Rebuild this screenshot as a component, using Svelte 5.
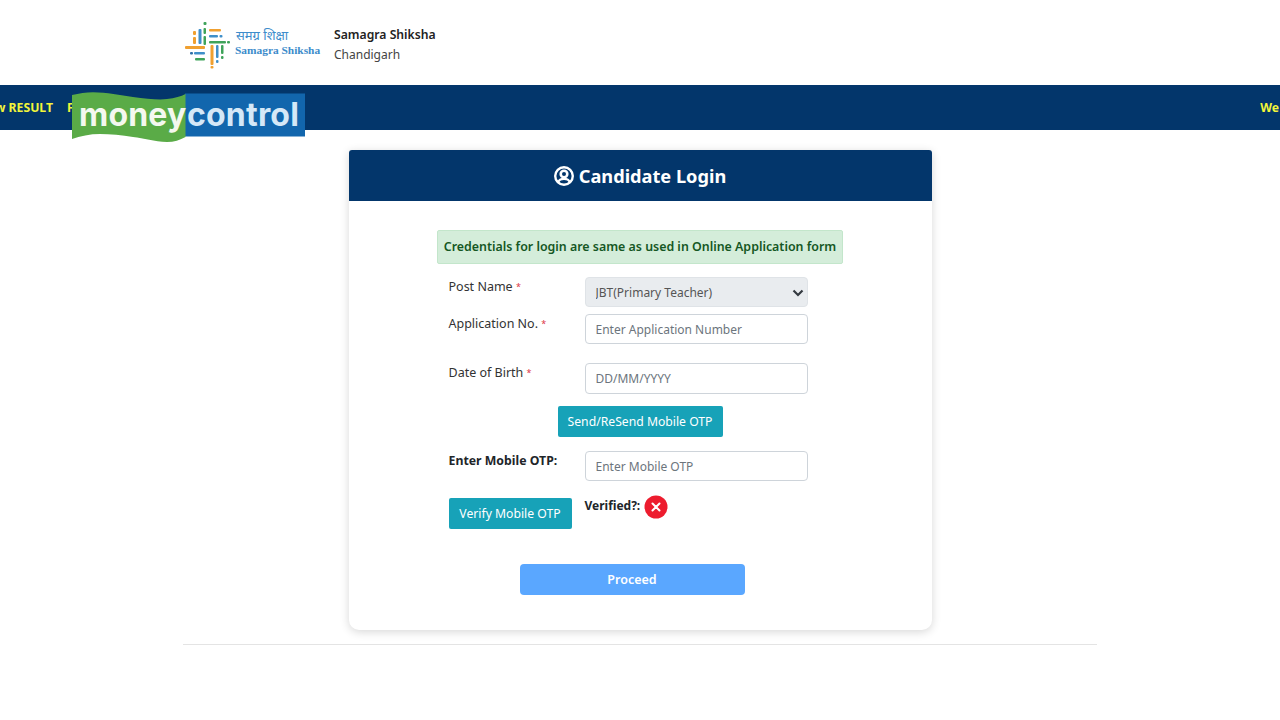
<script>
  let postName = 'JBT(Primary Teacher)';

  // logo bars: x, y, w, h, colour
  const O = '#f0a030', B = '#3f8fc9', G = '#3fa35a', N = '#2f6fa8';
  const bars = [
    [193, 31, 3, 4, O], [193, 37, 3, 7, O], [198.5, 29, 3, 15, B], [203.5, 22, 3, 3, G], [203.5, 28, 2.5, 6, G], [203.5, 36, 2.5, 9, G],
    [209, 29, 12, 2.5, O], [209, 35, 9, 2.5, B], [219.5, 35, 3, 2.5, B], [209, 41, 17, 2.5, G], [227, 41, 3, 2.5, G],
    [185, 46, 20, 3, O], [190, 52, 3, 2.5, N], [194, 52, 11, 2.5, B], [195, 58, 10, 2.5, G],
    [210.5, 45, 3, 20, O], [210.5, 66, 3, 2.5, O], [216, 45, 2.5, 13, B], [216, 60, 2.5, 3, B],
    [221, 45, 2.5, 9, G], [221, 56, 2.5, 3, G]
  ];
</script>

<header class="top">
  <svg class="mark" viewBox="180 18 54 54" width="54" height="54" aria-hidden="true">
    {#each bars as b}
      <rect x={b[0]} y={b[1]} width={b[2]} height={b[3]} rx="1" fill={b[4]} />
    {/each}
  </svg>
  <div class="logo-text">
    <span class="hi">समग्र शिक्षा</span>
    <span class="en">Samagra Shiksha</span>
  </div>
  <div class="org">
    <strong>Samagra Shiksha</strong>
    <span>Chandigarh</span>
  </div>
</header>

<div class="ticker">
  <span class="t1">w RESULT</span>
  <span class="t2">F</span>
  <span class="t3">We</span>
</div>

<div class="mc">
  <svg viewBox="0 0 233 50" width="233" height="50" aria-hidden="true">
    <rect x="113" y="1.5" width="120" height="43" fill="#1266ad" />
    <path d="M0 3 C7 1.5 14 0.3 21 0.3 C35 0.3 48 3.5 61 5 C75 7 88 8 95 7 C103 6 109 4.5 113.5 2 L113.5 45 C108 48 102 50 95 50 C82 49.5 72 46 61 45 C50 43 38 42 28 42 C18 42 8 44 0 47 Z" fill="#5aab47" />
  </svg>
  <span class="m1">money</span><span class="m2">control</span>
</div>

<main>
  <section class="card">
    <h1>
      <svg viewBox="0 0 20 20" width="20" height="20" aria-hidden="true">
        <circle cx="10" cy="10" r="8.8" fill="none" stroke="#fff" stroke-width="2.4" />
        <circle cx="10" cy="8" r="3.3" fill="none" stroke="#fff" stroke-width="2.6" />
        <path d="M4.4 16 C5.2 13.4 7.4 12.8 10 12.8 C12.6 12.8 14.8 13.4 15.6 16" fill="none" stroke="#fff" stroke-width="2.2" />
      </svg>
      Candidate Login
    </h1>

    <div class="body">
      <div class="alert">Credentials for login are same as used in Online Application form</div>

      <form class="form" on:submit|preventDefault>
        <div class="row r-post">
          <label for="post">Post Name <i>*</i></label>
          <div class="select-wrap">
            <select id="post" bind:value={postName} disabled>
              <option>JBT(Primary Teacher)</option>
            </select>
            <svg class="chev" viewBox="0 0 12 8" width="12" height="8" aria-hidden="true">
              <path d="M1.5 1.5 L6 6 L10.5 1.5" fill="none" stroke="#343a40" stroke-width="2.2" />
            </svg>
          </div>
        </div>

        <div class="row r-app">
          <label for="app">Application No. <i>*</i></label>
          <input id="app" type="text" placeholder="Enter Application Number" />
        </div>

        <div class="row r-dob">
          <label for="dob">Date of Birth <i>*</i></label>
          <input id="dob" type="text" placeholder="DD/MM/YYYY" />
        </div>

        <div class="send">
          <button type="button" class="teal send-btn">Send/ReSend Mobile OTP</button>
        </div>

        <div class="row r-otp">
          <label for="otp" class="strong">Enter Mobile OTP:</label>
          <input id="otp" type="text" placeholder="Enter Mobile OTP" />
        </div>

        <div class="row r-verify">
          <button type="button" class="teal verify-btn">Verify Mobile OTP</button>
          <div class="verified">
            <b>Verified?:</b>
            <svg viewBox="0 0 24 24" width="24" height="24" aria-hidden="true">
              <circle cx="12" cy="12" r="11.5" fill="#ed1c2e" />
              <path d="M8.5 8.5 L15.5 15.5 M15.5 8.5 L8.5 15.5" stroke="#fff" stroke-width="2" stroke-linecap="round" />
            </svg>
          </div>
        </div>

        <div class="proceed">
          <button type="submit" class="go">Proceed</button>
        </div>
      </form>
    </div>
  </section>
  <hr />
</main>

<style>
  :global(body) {
    margin: 0;
    background: #fff;
    font-family: "Noto Sans", "Open Sans", sans-serif;
    color: #212529;
  }

  .top {
    height: 85px;
    box-sizing: border-box;
    padding-left: 180px;
    display: flex;
    align-items: flex-start;
  }

  .mark {
    margin-top: 18px;
    flex: none;
  }

  .logo-text {
    display: flex;
    flex-direction: column;
    margin-top: 27px;
    color: #3d8ccb;
    width: 100px;
    font-family: "Liberation Serif", serif;
    font-weight: 700;
  }

  .hi {
    font-size: 13px;
    line-height: 17px;
    font-weight: 400;
    font-family: "Noto Sans", sans-serif;
    margin-left: 2px;
  }

  .en {
    font-size: 11.4px;
    line-height: 14px;
    margin-top: -1px;
    margin-left: 1px;
    white-space: nowrap;
  }

  .org {
    display: flex;
    flex-direction: column;
    margin-top: 25px;
    font-size: 12px;
    line-height: 20px;
    color: #444;
  }

  .org strong {
    font-size: 12.2px;
    font-weight: 600;
    color: #222;
  }

  .ticker {
    height: 45px;
    background: #03366b;
    display: flex;
    align-items: center;
    color: #f2f53a;
    font-size: 12.2px;
    font-weight: 700;
    box-sizing: border-box;
    overflow: hidden;
    white-space: nowrap;
  }

  .t1 {
    margin-left: -5px;
  }

  .t2 {
    margin-left: 14px;
  }

  .t3 {
    margin-left: auto;
    margin-right: 1px;
  }

  /* watermark laid over the page */
  .mc {
    position: absolute;
    left: 72px;
    top: 92px;
    width: 233px;
    height: 50px;
    font-family: "Inter", sans-serif;
    font-weight: 700;
    font-size: 32px;
    letter-spacing: 0.2px;
  }

  .mc svg {
    position: absolute;
    left: 0;
    top: 0;
  }

  .m1, .m2 {
    position: absolute;
    top: 1px;
    line-height: 44px;
  }

  .m1 {
    left: 7px;
    color: #f4f8ef;
  }

  .m2 {
    left: 115px;
    color: #d5e8f7;
  }

  main {
    display: flex;
    flex-direction: column;
    align-items: center;
  }

  .card {
    width: 583px;
    height: 480px;
    margin-top: 20px;
    border-radius: 3px 3px 10px 10px;
    box-shadow: 0 2px 10px rgba(0, 0, 0, 0.16);
    overflow: hidden;
    box-sizing: border-box;
    background: #fff;
  }

  h1 {
    margin: 0;
    height: 51px;
    background: #03366b;
    color: #fff;
    font-size: 18.2px;
    font-weight: 700;
    display: flex;
    align-items: center;
    justify-content: center;
    gap: 5px;
  }

  .body {
    display: flex;
    flex-direction: column;
    align-items: center;
  }

  .alert {
    margin-top: 29px;
    width: 406px;
    height: 34px;
    box-sizing: border-box;
    background: #d4edda;
    border: 1px solid #c3e6cb;
    border-radius: 2px;
    color: #155724;
    font-size: 12.4px;
    font-weight: 600;
    display: flex;
    align-items: center;
    justify-content: center;
    white-space: nowrap;
    padding-bottom: 2px;
  }

  .form {
    width: 383px;
    margin-top: 13px;
    font-size: 12.5px;
  }

  .row {
    display: flex;
    align-items: flex-start;
  }

  .row label {
    width: 136px;
    flex: none;
    color: #333;
    line-height: 18px;
    position: relative;
    top: 1px;
  }

  label i {
    color: #dc3545;
    font-style: normal;
    font-size: 9px;
    vertical-align: 1px;
  }

  .strong {
    font-size: 12.3px;
    font-weight: 700;
    color: #212529 !important;
  }

  .select-wrap {
    position: relative;
    width: 223px;
    height: 30px;
  }

  select {
    appearance: none;
    width: 100%;
    height: 100%;
    border: 1px solid #dfe3e7;
    border-radius: 4px;
    background: #e9ecef;
    color: #555;
    font: inherit;
    font-size: 12px;
    padding: 0 10px;
    opacity: 1;
  }

  .chev {
    position: absolute;
    right: 4px;
    top: 12px;
  }

  input {
    width: 223px;
    height: 30px;
    box-sizing: border-box;
    border: 1px solid #ced4da;
    border-radius: 4px;
    padding: 0 10px;
    font: inherit;
    font-size: 12px;
    background: #fff;
  }

  input::placeholder {
    color: #6c757d;
    opacity: 1;
  }

  .r-app { margin-top: 7px; }
  .r-dob { margin-top: 19px; }
  .r-dob input { height: 31px; }
  .r-otp { margin-top: 14px; }
  .r-verify { margin-top: 17px; }

  .send {
    margin-top: 12px;
    padding-left: 109px;
  }

  button {
    font: inherit;
    font-size: 12.2px;
    border: none;
    cursor: pointer;
  }

  .teal {
    height: 31px;
    background: #17a2b8;
    color: #fff;
    border-radius: 2px;
    padding: 0;
  }

  .send-btn { width: 165px; }
  .verify-btn { width: 123px; flex: none; }

  .verified {
    margin-left: 13px;
    margin-top: -3px;
    display: flex;
    align-items: center;
    gap: 4px;
    font-size: 12px;
  }

  .verified b {
    position: relative;
    top: -2px;
    font-weight: 700;
    color: #212529;
  }

  .proceed {
    margin-top: 35px;
    padding-left: 71px;
  }

  .go {
    width: 225px;
    height: 31px;
    background: #5aa7ff;
    color: #fff;
    border-radius: 4px;
    font-weight: 600;
    font-size: 12.5px;
  }

  hr {
    width: 914px;
    margin: 14px 0 0;
    border: none;
    border-top: 1px solid #e4e4e4;
  }
</style>
